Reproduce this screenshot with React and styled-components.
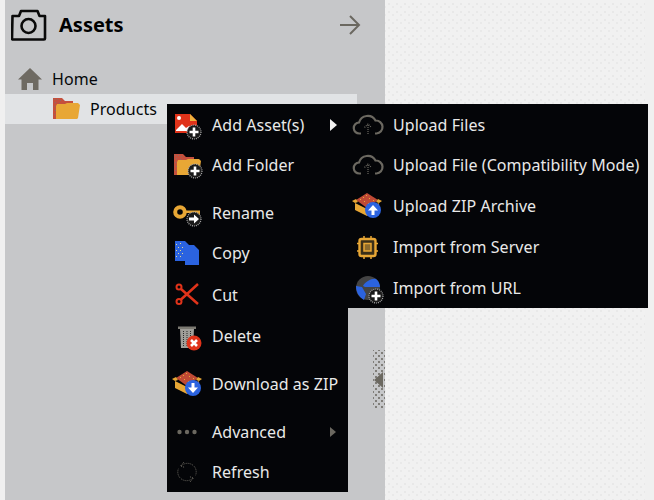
import React from 'react';
import styled, { createGlobalStyle } from 'styled-components';

const GlobalStyle = createGlobalStyle`
  html, body {
    margin: 0;
    padding: 0;
    background: #f0f0f0;
    font-family: "Noto Sans", "Open Sans", sans-serif;
  }
`;

const Page = styled.div`
  display: flex;
  width: 654px;
  height: 500px;
  padding-left: 5px;
  box-sizing: border-box;
  overflow: hidden;
`;

const Sidebar = styled.aside`
  position: relative;
  flex: 0 0 380px;
  background: #c6c7c9;
`;

const Content = styled.main`
  flex: 0 0 260px;
  background-color: #f1f1f1;
  background-image:
    radial-gradient(circle, #e8e8e8 0.8px, transparent 1px),
    radial-gradient(circle, #e9e9e9 0.8px, transparent 1px);
  background-size: 8px 8px;
  background-position: 0 0, 4px 3px;
`;

const Header = styled.header`
  display: flex;
  align-items: center;
  height: 50px;
  padding: 0 24px 0 6px;
`;

const Title = styled.h1`
  flex: 1;
  margin: 0 0 0 12px;
  font-size: 20px;
  line-height: 50px;
  font-weight: 700;
  color: #000;
`;

const Tree = styled.div`
  display: flex;
  flex-direction: column;
  width: 352px;
  padding-top: 14px;
`;

const TreeRow = styled.div`
  display: flex;
  align-items: center;
  height: 30px;
  padding-left: ${p => p.$indent}px;
  gap: ${p => p.$gap}px;
  background: ${p => (p.$selected ? '#e1e3e5' : 'transparent')};
  font-size: 16px;
  letter-spacing: 0.06px;
  color: #05070a;
`;

const Menu = styled.div`
  position: absolute;
  left: 162px;
  top: 104px;
  width: 181px;
  height: 388px;
  box-sizing: border-box;
  padding: 1px 0 0 6px;
  background: #040508;
`;

const SubMenu = styled.div`
  position: absolute;
  left: 100%;
  top: 0;
  width: 300px;
  height: 204px;
  box-sizing: border-box;
  padding: 1px 0 0 5px;
  background: #040508;
`;

const Item = styled.div`
  display: flex;
  align-items: center;
  height: ${p => p.$height || 40}px;
  margin-top: ${p => p.$gap || 0}px;
  font-size: 16px;
  letter-spacing: 0.06px;
  color: #e9e9e9;
  white-space: nowrap;
`;

const Icon = styled.svg`
  flex: 0 0 30px;
  width: 30px;
  height: 30px;
  overflow: visible;
`;

const Label = styled.span`
  margin-left: ${p => p.$offset}px;
`;

const Caret = styled.span`
  position: absolute;
  left: 163px;
  width: 0;
  height: 0;
  border-style: solid;
  border-width: ${p => p.$size}px 0 ${p => p.$size}px ${p => p.$size + 1}px;
  border-color: transparent transparent transparent ${p => p.$color};
`;

const Splitter = styled.button`
  position: absolute;
  right: 0;
  top: 350px;
  width: 12px;
  height: 59px;
  padding: 0 0 0 1px;
  border: 0;
  display: flex;
  align-items: center;
  justify-content: flex-start;
  background-color: #c6c7c9;
  background-image:
    radial-gradient(circle, #7d7b76 0.7px, transparent 0.9px),
    radial-gradient(circle, #7d7b76 0.7px, transparent 0.9px);
  background-size: 6px 6px;
  background-position: 0 0, 3px 3px;
`;

const SplitterArrow = styled.span`
  flex: none;
  width: 0;
  height: 0;
  border-style: solid;
  border-width: 8px 9px 8px 0;
  border-color: transparent #6b6860 transparent transparent;
`;

const CameraIcon = () => (
  <svg width="36" height="32" viewBox="0 0 36 32" fill="none" stroke="#0a0a0a" strokeWidth="2.600">
    <path d="M1.500 7h6.500l2-5h16.500l2 5h5.500v22.500a1 1 0 0 1-1 1h-31a1 1 0 0 1-1-1z" strokeLinejoin="round" />
    <circle cx="17.500" cy="17" r="7" />
  </svg>
);

const ArrowIcon = () => (
  <svg width="22" height="22" viewBox="0 0 22 22" fill="none" stroke="#6b6860" strokeWidth="2">
    <path d="M1 11h19M11 2l9 9-9 9" />
  </svg>
);

const HomeIcon = () => (
  <svg width="26" height="24" viewBox="0 0 26 24" fill="#6e6a62">
    <path d="M13 1L25 12.500h-3.500V23h-5.500v-7h-6v7H4.500V12.500H1z" />
  </svg>
);

const FolderShape = ({ x = 0, y = 0 }) => (
  <g transform={`translate(${x} ${y})`}>
    <path d="M0 1h9l3 3h8v5H4v13H0z" fill="#c5503d" />
    <path d="M1 2h1v1H1zM4 2h1v1H4zM7 3h1v1H7zM2 5h1v1H2zM6 6h1v1H6zM1 9h1v1H1zM2 13h1v1H2zM1 17h1v1H1z" fill="#8d6b63" />
    <path d="M3 22V9l1-2h8l2-1h11l2 2-2 13-1 1z" fill="#e8a735" />
  </g>
);

// round overlay badge shared by the menu icons
const Badge = ({ cx, cy, r = 7, fill = '#1a1a1a', children }) => (
  <g transform={`translate(${cx} ${cy})`}>
    <circle r={r} fill={fill} stroke={fill === '#1a1a1a' ? '#a8a8a8' : 'none'} strokeWidth="1.200" strokeDasharray="1 1" />
    {children}
  </g>
);

const Plus = () => <path d="M-4.500 0h9M0-4.500v9" stroke="#fff" strokeWidth="2.600" />;

const AssetIcon = () => (
  <Icon viewBox="0 0 30 30">
    <path d="M2 4h15l7 7v12H2z" fill="#e0331a" />
    <path d="M17 4l7 7h-7z" fill="#eeb13c" />
    <circle cx="6" cy="8" r="2" fill="#fff" />
    <path d="M3 20l6-6 4 4 3-2 5 4v1H3z" fill="#fff" />
    <Badge cx={21} cy={22}><Plus /></Badge>
  </Icon>
);

const FolderAddIcon = () => (
  <Icon viewBox="0 0 30 30">
    <FolderShape x={1} y={3} />
    <Badge cx={22} cy={21}><Plus /></Badge>
  </Icon>
);

const KeyIcon = () => (
  <Icon viewBox="0 0 30 30">
    <circle cx="7" cy="14" r="4.800" fill="none" stroke="#e8a735" strokeWidth="4" />
    <path d="M11 12.500h16v4.500h-2v-2H11z" fill="#e8a735" />
    <Badge cx={21} cy={21}>
      <path d="M-5-1.500h5V-4.500L5 0l-5 4.500V1.500h-5z" fill="#fff" />
    </Badge>
  </Icon>
);

const CopyIcon = () => (
  <Icon viewBox="0 0 30 30">
    <path d="M2 3h10l4 4h5l5 5v15H12v-4H2z" fill="#2b63e0" />
    <path d="M3 6h1v1H3zM7 5h1v1H7zM5 9h1v1H5zM9 9h1v1H9zM3 12h1v1H3zM7 12h1v1H7zM5 15h1v1H5zM9 15h1v1H9zM3 18h1v1H3zM7 18h1v1H7z" fill="#e6d98f" />
  </Icon>
);

const ScissorsIcon = () => (
  <Icon viewBox="0 0 30 30" fill="none" stroke="#e0331a" strokeWidth="2">
    <circle cx="6" cy="7" r="2.500" />
    <circle cx="6" cy="21.500" r="2.500" />
    <path d="M8 9l17 15M8 19.500L25 4" strokeWidth="2.500" />
  </Icon>
);

const TrashIcon = () => (
  <Icon viewBox="0 0 30 30">
    <path d="M5 5.500h18v2.500H5z" fill="#7c7a72" />
    <path d="M7 8h14l-1 19H8z" fill="#a09e98" />
    <path d="M10.500 10v15M14 10v15M17.500 10v15" stroke="#2b2b2b" strokeWidth="1" strokeDasharray="1 1" />
    <Badge cx={21} cy={22} r={7.500} fill="#e0331a">
      <path d="M-3-3l6 6M3-3l-6 6" stroke="#fff" strokeWidth="2.600" />
    </Badge>
  </Icon>
);

const BoxShape = () => (
  <>
    <path d="M3 9L14 2l11 7-11 8z" fill="#bf4a35" />
    <path d="M7 8h1v1H7zM10 6h1v1h-1zM13 4h1v1h-1zM16 7h1v1h-1zM11 10h1v1h-1zM20 9h1v1h-1zM15 12h1v1h-1z" fill="#e8a735" />
    <path d="M-1 10l4-2 2 3-3 1zM29 10l-4-2-2 3 3 1z" fill="#e8a735" />
    <path d="M2 12l12 6v7L2 19z" fill="#e8a735" />
    <path d="M26 12l-12 6v7l12-6z" fill="#d08f25" />
  </>
);

const ZipDownIcon = () => (
  <Icon viewBox="0 0 30 30">
    <BoxShape />
    <Badge cx={20} cy={19} r={8} fill="#2b63e0">
      <path d="M-1.500-5h3v4.500H5L0 5l-5-5.500h3.500z" fill="#fff" />
    </Badge>
  </Icon>
);

const ZipUpIcon = () => (
  <Icon viewBox="0 0 30 30">
    <BoxShape />
    <Badge cx={20} cy={19} r={8} fill="#2b63e0">
      <path d="M-1.500 5h3V0.500H5L0-5l-5 5.500h3.500z" fill="#fff" />
    </Badge>
  </Icon>
);

const DotsIcon = () => (
  <Icon viewBox="0 0 30 30" fill="#6b6860">
    <circle cx="6.500" cy="15" r="2.200" />
    <circle cx="14" cy="15" r="2.200" />
    <circle cx="21.500" cy="15" r="2.200" />
  </Icon>
);

const RefreshIcon = () => (
  <Icon viewBox="0 0 30 30" fill="none" stroke="#6b6860" strokeWidth="1" strokeDasharray="1 1">
    <path d="M8 9a9 9 0 0 1 14 1.500 9 9 0 0 1 .5 8M20 21a9 9 0 0 1-14-1.500 9 9 0 0 1-.5-8" />
    <path d="M11 5L7.500 9l4.500 1.500M17 25l3.500-4-4.500-1.500" />
  </Icon>
);

const CloudIcon = () => (
  <Icon viewBox="0 0 30 30" fill="none" stroke="#6b6860">
    <path d="M8 23.500H6.500a5.500 5.500 0 0 1-.5-11A9 9 0 0 1 22.500 10.500a6.500 6.500 0 0 1 1 13H22" strokeWidth="2.200" />
    <path d="M15 24V14M11.500 17.500L15 14l3.500 3.500" strokeWidth="1.200" strokeDasharray="1 1" />
  </Icon>
);

const ChipIcon = () => (
  <Icon viewBox="0 0 30 30" fill="none" stroke="#e8a735">
    <rect x="6.500" y="7" width="16" height="17" rx="2" fill="#3a2f18" strokeWidth="2.400" />
    <rect x="11" y="11.500" width="7" height="7.500" fill="#8d6b2c" strokeWidth="1.500" />
    <path d="M11 4v3M18 4v3M11 24v3M18 24v3M4 11.500h3M4 19h3M22 11.500h3M22 19h3" strokeWidth="1.500" />
  </Icon>
);

const GlobeIcon = () => (
  <Icon viewBox="0 0 30 30">
    <circle cx="15" cy="15" r="12" fill="#444" />
    <path d="M10 13c2-4 9-8 13-7 3 2 4 6 4 8H12zM3 13l6 1 4 7-2 6C6 24 3 19 3 13z" fill="#2b63e0" />
    <Badge cx={23} cy={23}><Plus /></Badge>
  </Icon>
);

const mainItems = [
  { label: 'Add Asset(s)', icon: AssetIcon, caret: '#f2f2f2', caretSize: 6 },
  { label: 'Add Folder', icon: FolderAddIcon },
  { label: 'Rename', icon: KeyIcon, gap: 8 },
  { label: 'Copy', icon: CopyIcon },
  { label: 'Cut', icon: ScissorsIcon, gap: 2 },
  { label: 'Delete', icon: TrashIcon, height: 41 },
  { label: 'Download as ZIP', icon: ZipDownIcon, gap: 8 },
  { label: 'Advanced', icon: DotsIcon, gap: 8, caret: '#6b6860', caretSize: 5 },
  { label: 'Refresh', icon: RefreshIcon },
];

const subItems = [
  { label: 'Upload Files', icon: CloudIcon },
  { label: 'Upload File (Compatibility Mode)', icon: CloudIcon },
  { label: 'Upload ZIP Archive', icon: ZipUpIcon, height: 41 },
  { label: 'Import from Server', icon: ChipIcon, height: 41 },
  { label: 'Import from URL', icon: GlobeIcon, height: 41 },
];

const App = () => {
  return (
    <Page>
      <GlobalStyle />
      <Sidebar>
        <Header>
          <CameraIcon />
          <Title>Assets</Title>
          <ArrowIcon />
        </Header>
        <Tree>
          <TreeRow $indent={12} $gap={9}>
            <HomeIcon />
            Home
          </TreeRow>
          <TreeRow $indent={48} $gap={7} $selected>
            <svg width="30" height="24" viewBox="0 0 30 24"><FolderShape /></svg>
            Products
          </TreeRow>
        </Tree>
        <Menu>
          {mainItems.map(item => (
            <Item key={item.label} $gap={item.gap} $height={item.height}>
              <item.icon />
              <Label $offset={9}>{item.label}</Label>
              {item.caret && <Caret $color={item.caret} $size={item.caretSize} />}
            </Item>
          ))}
          <SubMenu>
            {subItems.map(item => (
              <Item key={item.label} $height={item.height}>
                <item.icon />
                <Label $offset={10}>{item.label}</Label>
              </Item>
            ))}
          </SubMenu>
        </Menu>
        <Splitter>
          <SplitterArrow />
        </Splitter>
      </Sidebar>
      <Content />
    </Page>
  );
};

export default App;
